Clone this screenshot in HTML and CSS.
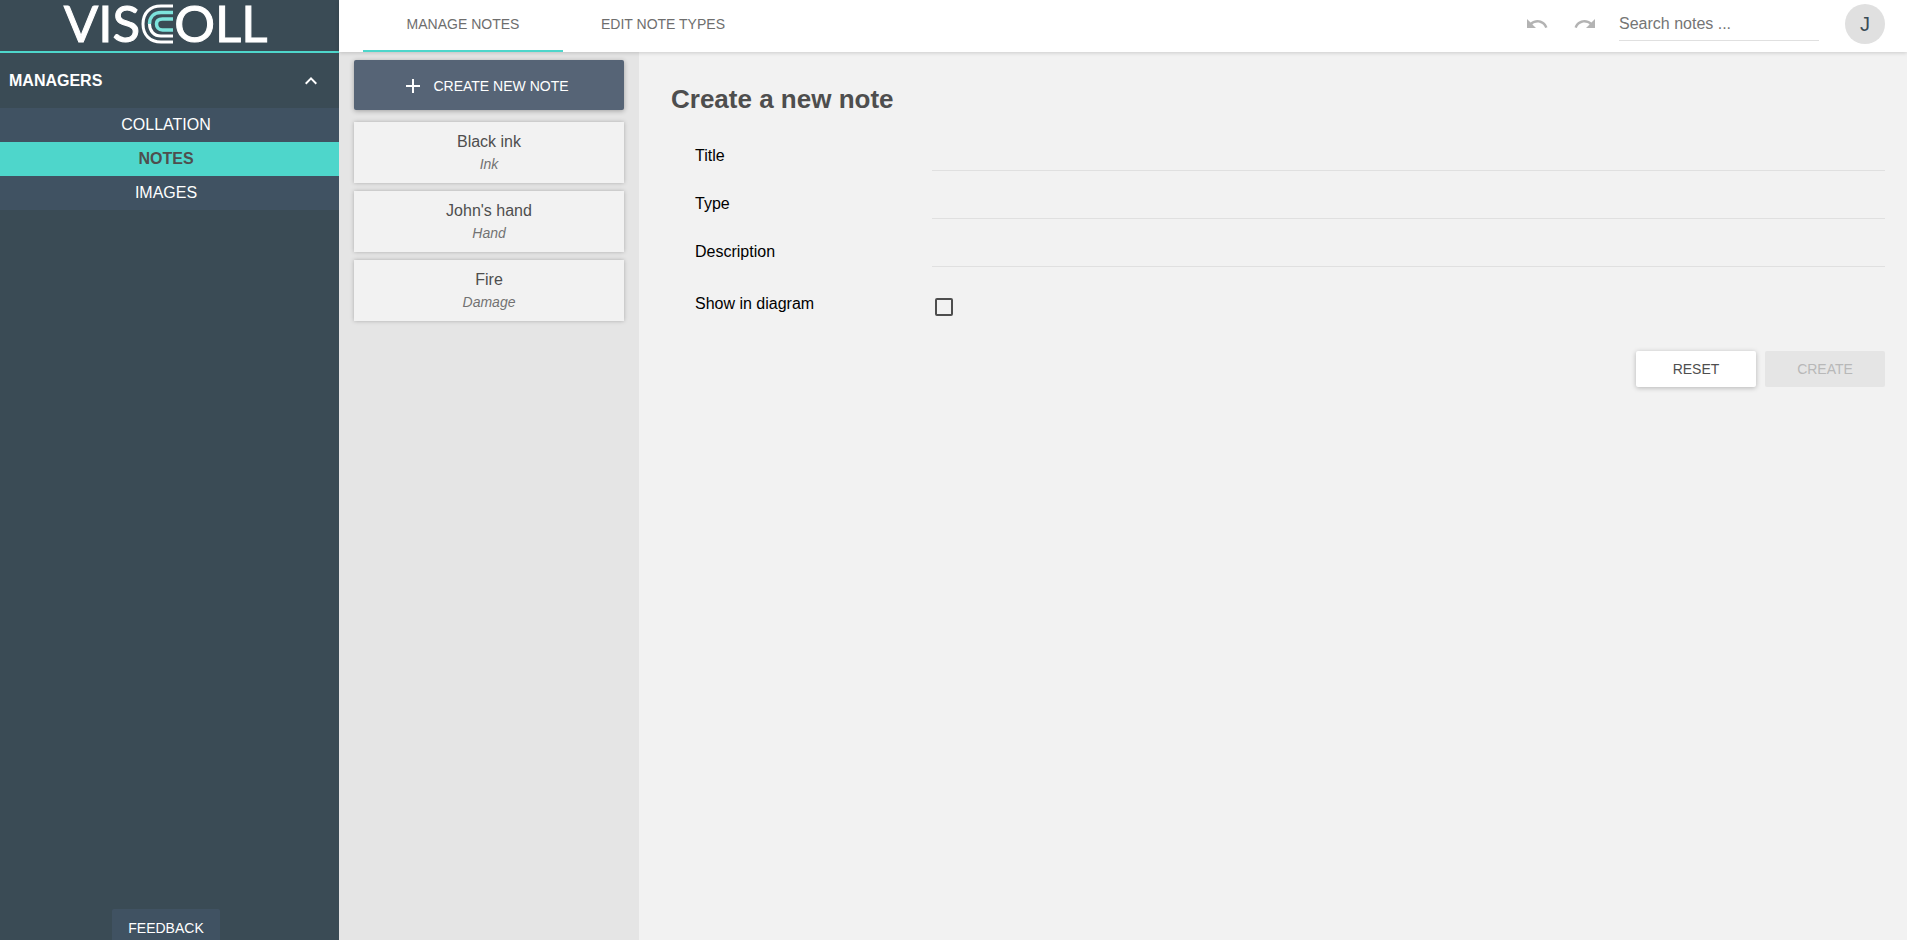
FILE: index.html
```html
<!DOCTYPE html>
<html lang="en">
<head>
<meta charset="utf-8">
<title>VisColl – Notes</title>
<link rel="stylesheet" href="styles.css">
</head>
<body>
<div class="app">
  <aside class="sidebar">
    <div class="logo" role="img" aria-label="VisColl">
      <span>VIS</span>
      <svg class="logo-mark" width="32" height="40" viewBox="0 0 32 40" fill="none">
        <g stroke="#fff" stroke-width="3">
          <path d="M32 2H20C9 2 2 9 2 20s7 18 18 18h12"/>
          <path d="M8.500 20C8.500 27 13 32 20 32h12"/>
        </g>
        <path d="M8.500 20C8.500 13 13 8.500 20 8.500h12" stroke="#7de3dc" stroke-width="3.500"/>
        <path d="M32 15H21.500c-4 0-6 2-6 5s2 6 6 6H32" stroke="#7de3dc" stroke-width="3.500"/>
      </svg>
      <span>OLL</span>
    </div>
    <button class="section-toggle" type="button" aria-expanded="true">
      <span>MANAGERS</span>
      <svg width="24" height="24" viewBox="0 0 24 24" fill="currentColor"><path d="M12 8l-6 6 1.410 1.410L12 10.830l4.590 4.580L18 14z"/></svg>
    </button>
    <nav class="managers">
      <a href="#collation">COLLATION</a>
      <a href="#notes" class="active">NOTES</a>
      <a href="#images">IMAGES</a>
    </nav>
    <button class="feedback" type="button">FEEDBACK</button>
  </aside>
  <div class="workspace">
    <header class="topbar">
      <div class="tabs">
        <button class="tab selected" type="button">MANAGE NOTES</button>
        <button class="tab" type="button">EDIT NOTE TYPES</button>
      </div>
      <div class="tools">
        <button class="icon-button" type="button" aria-label="Undo"><svg width="24" height="24" viewBox="0 0 24 24" fill="currentColor"><path d="M12.500 8c-2.650 0-5.050.99-6.900 2.600L2 7v9h9l-3.620-3.620c1.390-1.160 3.160-1.880 5.120-1.880 3.540 0 6.550 2.310 7.600 5.500l2.370-.78C21.080 11.030 17.150 8 12.500 8z"/></svg></button>
        <button class="icon-button" type="button" aria-label="Redo"><svg width="24" height="24" viewBox="0 0 24 24" fill="currentColor"><path d="M18.400 10.600C16.550 8.990 14.150 8 11.500 8c-4.650 0-8.580 3.030-9.960 7.220L3.900 16c1.050-3.190 4.050-5.500 7.600-5.500 1.950 0 3.730.72 5.120 1.880L13 16h9V7l-3.600 3.600z"/></svg></button>
        <input class="search" type="text" placeholder="Search notes ..." aria-label="Search notes">
        <button class="avatar" type="button" aria-label="Account J">J</button>
      </div>
    </header>
    <div class="content">
      <section class="note-list" aria-label="Notes">
        <button class="create-note" type="button">
          <svg width="24" height="24" viewBox="0 0 24 24" fill="currentColor"><path d="M19 13h-6v6h-2v-6H5v-2h6V5h2v6h6v2z"/></svg>
          <span>CREATE NEW NOTE</span>
        </button>
        <button class="note" type="button"><span class="note-title">Black ink</span><span class="note-type">Ink</span></button>
        <button class="note" type="button"><span class="note-title">John's hand</span><span class="note-type">Hand</span></button>
        <button class="note" type="button"><span class="note-title">Fire</span><span class="note-type">Damage</span></button>
      </section>
      <main class="editor">
        <h1>Create a new note</h1>
        <form>
          <div class="row"><label for="title">Title</label><input class="field" id="title" type="text"></div>
          <div class="row"><label for="type">Type</label><input class="field" id="type" type="text"></div>
          <div class="row"><label for="description">Description</label><input class="field" id="description" type="text"></div>
          <div class="row check-row"><label for="show">Show in diagram</label><input class="check" id="show" type="checkbox"></div>
          <div class="actions">
            <button class="action" type="reset">RESET</button>
            <button class="action" type="submit" disabled>CREATE</button>
          </div>
        </form>
      </main>
    </div>
  </div>
</div>
</body>
</html>
```
FILE: styles.css
```css
* { box-sizing: border-box; }

body {
  margin: 0;
  font-family: "Liberation Sans", Arial, sans-serif;
  font-size: 16px;
  color: #4e4e4e;
  background: #f2f2f2;
}

button, input { font-family: inherit; margin: 0; }
button { border: 0; padding: 0; background: none; cursor: pointer; }

.app { display: flex; min-height: 100vh; }

.sidebar {
  flex: 0 0 339px;
  display: flex;
  flex-direction: column;
  background: #3a4b55;
  color: #fff;
}

.logo {
  display: flex;
  align-items: center;
  justify-content: center;
  gap: 1px;
  height: 53px;
  padding-bottom: 4px;
  padding-right: 8px;
  border-bottom: 2px solid #4ed6cb;
  font-family: Lato, sans-serif;
  font-size: 51px;
  line-height: 47px;
  -webkit-text-stroke: 1px #fff;
}

.logo span { padding-bottom: 2px; }

.section-toggle {
  display: flex;
  align-items: center;
  justify-content: space-between;
  height: 55px;
  padding: 0 16px 0 9px;
  color: #fff;
  font-size: 16px;
  font-weight: bold;
}

.managers { display: flex; flex-direction: column; }

.managers a {
  padding-right: 7px;
  background: #405262;
  color: #fff;
  line-height: 34px;
  text-align: center;
  text-decoration: none;
}

.managers .active {
  background: #4ed6cb;
  color: #4e4e4e;
  font-weight: bold;
}

.feedback {
  align-self: center;
  margin-top: auto;
  margin-right: 7px;
  padding: 11px 16px 3px;
  border-radius: 2px 2px 0 0;
  background: #405262;
  color: #fff;
  font-size: 14px;
  line-height: 17px;
}

.workspace { flex: 1; display: flex; flex-direction: column; min-width: 0; }

.topbar {
  display: flex;
  justify-content: space-between;
  height: 52px;
  padding: 0 22px 0 24px;
  background: #fff;
  box-shadow: 0 1px 4px rgba(0, 0, 0, 0.16);
  z-index: 1;
}

.tabs { display: flex; }

.tab {
  width: 200px;
  padding-bottom: 2px;
  border-bottom: 2px solid transparent;
  color: #6e6e6e;
  font-size: 14px;
}

.tab.selected { border-bottom-color: #4ed6cb; }

.tools { display: flex; align-items: center; gap: 24px; padding-bottom: 4px; }

.icon-button {
  width: 24px;
  height: 24px;
  color: #b3b3b3;
}

.icon-button svg { display: block; }

.search {
  width: 202px;
  height: 34px;
  margin-left: -2px;
  margin-right: 2px;
  padding: 0;
  border: 0;
  border-bottom: 1px solid #e0e0e0;
  background: none;
  font-size: 16px;
}

.search { width: 200px; }

.search::placeholder { color: #757575; opacity: 1; }

.avatar {
  width: 40px;
  height: 40px;
  border-radius: 50%;
  background: #e0e0e0;
  color: #3a4b55;
  font-size: 20px;
}

.content { flex: 1; display: flex; }

.note-list {
  flex: 0 0 300px;
  display: flex;
  flex-direction: column;
  gap: 8px;
  padding: 8px 15px;
  background: #e5e5e5;
}

.create-note {
  display: flex;
  align-items: center;
  justify-content: center;
  gap: 8px;
  height: 50px;
  margin-bottom: 4px;
  padding: 2px 8px 0 0;
  border-radius: 2px;
  background: #566476;
  box-shadow: 0 1px 5px rgba(0, 0, 0, 0.3);
  color: #fff;
  font-size: 14px;
}

.note {
  display: flex;
  flex-direction: column;
  align-items: center;
  padding: 9px 0 8px;
  background: #f2f2f2;
  box-shadow: 0 0 4px rgba(0, 0, 0, 0.25);
}

.note-title { color: #4e4e4e; font-size: 16px; line-height: 22px; }
.note-type { color: #727272; font-size: 14px; font-style: italic; line-height: 22px; }

.editor { flex: 1; padding: 32px 22px 32px 32px; min-width: 0; }

h1 { margin: 0 0 23px; font-size: 26px; line-height: 30px; }

.row {
  display: flex;
  height: 48px;
  padding-left: 24px;
  color: #000;
}

.row label { flex: 0 0 237px; padding-top: 10px; line-height: 18px; }

.field {
  flex: 1;
  height: 34px;
  border: 0;
  border-bottom: 1px solid #e0e0e0;
  background: none;
  font-size: 16px;
}

.check-row label { padding-top: 14px; }

.check {
  appearance: none;
  width: 18px;
  height: 18px;
  margin: 17px 0 0 3px;
  border: 2px solid #4e4e4e;
  border-radius: 2px;
}

.check:checked { background: #4ed6cb; }

.actions { display: flex; justify-content: flex-end; gap: 9px; padding-top: 22px; }

.action {
  width: 120px;
  height: 36px;
  border-radius: 2px;
  background: #fff;
  box-shadow: 0 1px 5px rgba(0, 0, 0, 0.25);
  color: #4e4e4e;
  font-size: 14px;
}

.action:disabled { background: #e5e5e5; box-shadow: none; color: #b8b8b8; }
```
